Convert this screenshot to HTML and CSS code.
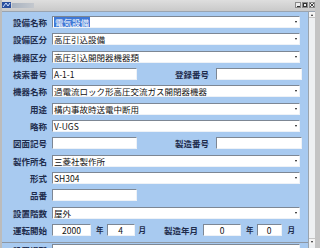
FILE: index.html
```html
<!DOCTYPE html>
<html lang="ja">
<head>
    <meta charset="UTF-8">
    <title>設備台帳</title>
    <link rel="stylesheet" href="styles.css">
</head>
<body>
    <div class="window">
        <div class="title-bar">
            <svg class="app-icon" width="9" height="6" viewBox="0 0 9 6">
                <rect width="9" height="6" fill="#2a4f9e"/>
                <path d="M1 5 L4 1 L6 4 L8 1" stroke="#cfe0ff" stroke-width="1" fill="none"/>
            </svg>
            <span class="title-text"></span>
            <div class="caption-buttons">
                <span class="cap-btn"><i class="cap-min"></i></span>
                <span class="cap-btn"><i class="cap-max"></i></span>
                <span class="cap-btn">
                    <svg width="4" height="4" viewBox="0 0 4 4"><path d="M0 0 L4 4 M4 0 L0 4" stroke="#444" stroke-width="1"/></svg>
                </span>
            </div>
        </div>

        <div class="client">
            <div class="form">
                <div class="row">
                    <span class="label">設備名称</span>
                    <div class="field combo"><span class="value"><span class="selected">電気設備</span></span><i class="drop"></i></div>
                </div>
                <div class="row">
                    <span class="label">設備区分</span>
                    <div class="field combo"><span class="value">高圧引込設備</span><i class="drop"></i></div>
                </div>
                <div class="row">
                    <span class="label">機器区分</span>
                    <div class="field combo"><span class="value">高圧引込開閉器機器類</span><i class="drop"></i></div>
                </div>
                <div class="row">
                    <span class="label">検索番号</span>
                    <div class="field short"><span class="value">A-1-1</span></div>
                    <span class="label label-mid">登録番号</span>
                    <div class="field short-right"></div>
                </div>
                <div class="row">
                    <span class="label">機器名称</span>
                    <div class="field combo"><span class="value">過電流ロック形高圧交流ガス開閉器機器</span><i class="drop"></i></div>
                </div>
                <div class="row">
                    <span class="label">用途</span>
                    <div class="field combo"><span class="value">構内事故時送電中断用</span><i class="drop"></i></div>
                </div>
                <div class="row">
                    <span class="label">略称</span>
                    <div class="field combo"><span class="value">V-UGS</span><i class="drop"></i></div>
                </div>
                <div class="row">
                    <span class="label">図面記号</span>
                    <div class="field short"></div>
                    <span class="label label-mid">製造番号</span>
                    <div class="field short-right"></div>
                </div>
                <div class="row">
                    <span class="label">製作所名</span>
                    <div class="field combo"><span class="value">三菱社製作所</span><i class="drop"></i></div>
                </div>
                <div class="row">
                    <span class="label">形式</span>
                    <div class="field combo"><span class="value">SH304</span><i class="drop"></i></div>
                </div>
                <div class="row">
                    <span class="label">品番</span>
                    <div class="field short"></div>
                </div>
                <div class="row">
                    <span class="label">設置階数</span>
                    <div class="field combo"><span class="value">屋外</span><i class="drop"></i></div>
                </div>
                <div class="row">
                    <span class="label">運転開始</span>
                    <div class="field num year-start"><span class="value">2000</span></div>
                    <span class="unit unit-year">年</span>
                    <div class="field num month-start"><span class="value">4</span></div>
                    <span class="unit unit-month">月</span>
                    <span class="label label-date">製造年月</span>
                    <div class="field num year-made"><span class="value">0</span></div>
                    <span class="unit unit-year">年</span>
                    <div class="field num month-made"><span class="value">0</span></div>
                    <span class="unit unit-month-end">月</span>
                </div>
                <div class="row row-clipped">
                    <span class="label">設置場所</span>
                    <div class="field combo"><span class="value"></span><i class="drop"></i></div>
                </div>
            </div>

            <div class="vscroll">
                <span class="scroll-btn"><i class="arrow-up"></i></span>
                <span class="scroll-track"></span>
                <span class="scroll-btn"><i class="arrow-down"></i></span>
            </div>
        </div>
    </div>
</body>
</html>
```

FILE: styles.css
```css
* {
    margin: 0;
    padding: 0;
    box-sizing: border-box;
}

html, body {
    width: 320px;
    height: 248px;
    overflow: hidden;
}

body {
    background: #c8c8c8;
    font-family: "Noto Sans CJK JP", sans-serif;
}

.window {
    width: 320px;
    height: 248px;
    display: flex;
    flex-direction: column;
    background: #d0d0d0;
    border-left: 2px solid #bcbcbc;
    border-right: 5px solid #c4c4c4;
}

/* title bar */
.title-bar {
    height: 12px;
    flex: none;
    display: flex;
    align-items: center;
    background: linear-gradient(#dedede, #c9c9c9);
    border-bottom: 1px solid #9aa4b0;
}

.app-icon {
    display: block;
    margin-top: -1px;
}

.title-text {
    width: 22px;
    height: 5px;
    margin-left: 1px;
    margin-top: -1px;
    background: linear-gradient(90deg, #a9b3c0, #c4c8ce);
}

.caption-buttons {
    margin-left: auto;
    display: flex;
    gap: 1px;
    margin-top: -1px;
}

.cap-btn {
    width: 6px;
    height: 6px;
    border: 1px solid #8a8a8a;
    background: #ececec;
    display: flex;
    align-items: center;
    justify-content: center;
    overflow: hidden;
}

.cap-btn svg {
    display: block;
}

.cap-min {
    width: 3px;
    height: 1px;
    margin-top: 2px;
    background: #333;
}

.cap-max {
    width: 4px;
    height: 4px;
    border: 1px solid #333;
}

/* client area */
.client {
    flex: 1;
    display: flex;
    min-height: 0;
    background: #a8caf0;
}

.form {
    flex: 1;
    padding-top: 4px;
    overflow: hidden;
}

.row {
    height: 17.33px;
    display: flex;
    align-items: flex-start;
}

.label {
    width: 45px;
    height: 12px;
    margin-right: 5px;
    flex: none;
    text-align: right;
    font-size: 8.5px;
    line-height: 12px;
    font-weight: 700;
    color: #1f2d4d;
    white-space: nowrap;
}

.field {
    height: 12px;
    flex: none;
    background: #fff;
    border: 1px solid;
    border-color: #7d8794 #eef2f7 #eef2f7 #7d8794;
    display: flex;
    align-items: center;
    font-size: 8.5px;
    line-height: 10px;
    color: #111;
    white-space: nowrap;
    overflow: hidden;
}

.value {
    flex: 1;
    padding-left: 1px;
}

.selected {
    background: #3f78d6;
    color: #fff;
    padding: 0 1px;
}

.combo {
    width: 248px;
}

.drop {
    width: 0;
    height: 0;
    margin-right: 2px;
    border-left: 1.5px solid transparent;
    border-right: 1.5px solid transparent;
    border-top: 2px solid #111;
}

.short {
    width: 85px;
}

.label-mid {
    width: 72px;
    margin-right: 7px;
}

.short-right {
    width: 86px;
}

/* date row */
.num .value {
    padding-left: 0;
    text-align: center;
}

.year-start {
    width: 39px;
}

.month-start {
    width: 28px;
}

.year-made {
    width: 38px;
}

.month-made {
    width: 25px;
}

.unit {
    height: 12px;
    font-size: 7.5px;
    line-height: 12px;
    font-weight: 700;
    color: #1f2d4d;
    flex: none;
}

.unit-year {
    margin-left: 5px;
    margin-right: 3px;
}

.unit-month {
    margin-left: 4px;
}

.unit-month-end {
    margin-left: 6px;
}

.label-date {
    width: 52px;
    margin-right: 5px;
}

.row-clipped {
    border-top: 1px solid #8d97a3;
    margin-top: 1px;
    padding-top: 1px;
}

/* scrollbar */
.vscroll {
    width: 7px;
    flex: none;
    display: flex;
    flex-direction: column;
    background: #eef0f2;
    border-left: 1px solid #9aa4ae;
}

.scroll-btn {
    height: 6px;
    flex: none;
    display: flex;
    align-items: center;
    justify-content: center;
    background: #f4f4f4;
    border-bottom: 1px solid #c6c6c6;
}

.scroll-btn:last-child {
    border-bottom: none;
    border-top: 1px solid #c6c6c6;
    margin-bottom: 4px;
}

.scroll-track {
    flex: 1;
}

.arrow-up {
    border-left: 1.5px solid transparent;
    border-right: 1.5px solid transparent;
    border-bottom: 2px solid #222;
}

.arrow-down {
    border-left: 1.5px solid transparent;
    border-right: 1.5px solid transparent;
    border-top: 2px solid #222;
}
```
